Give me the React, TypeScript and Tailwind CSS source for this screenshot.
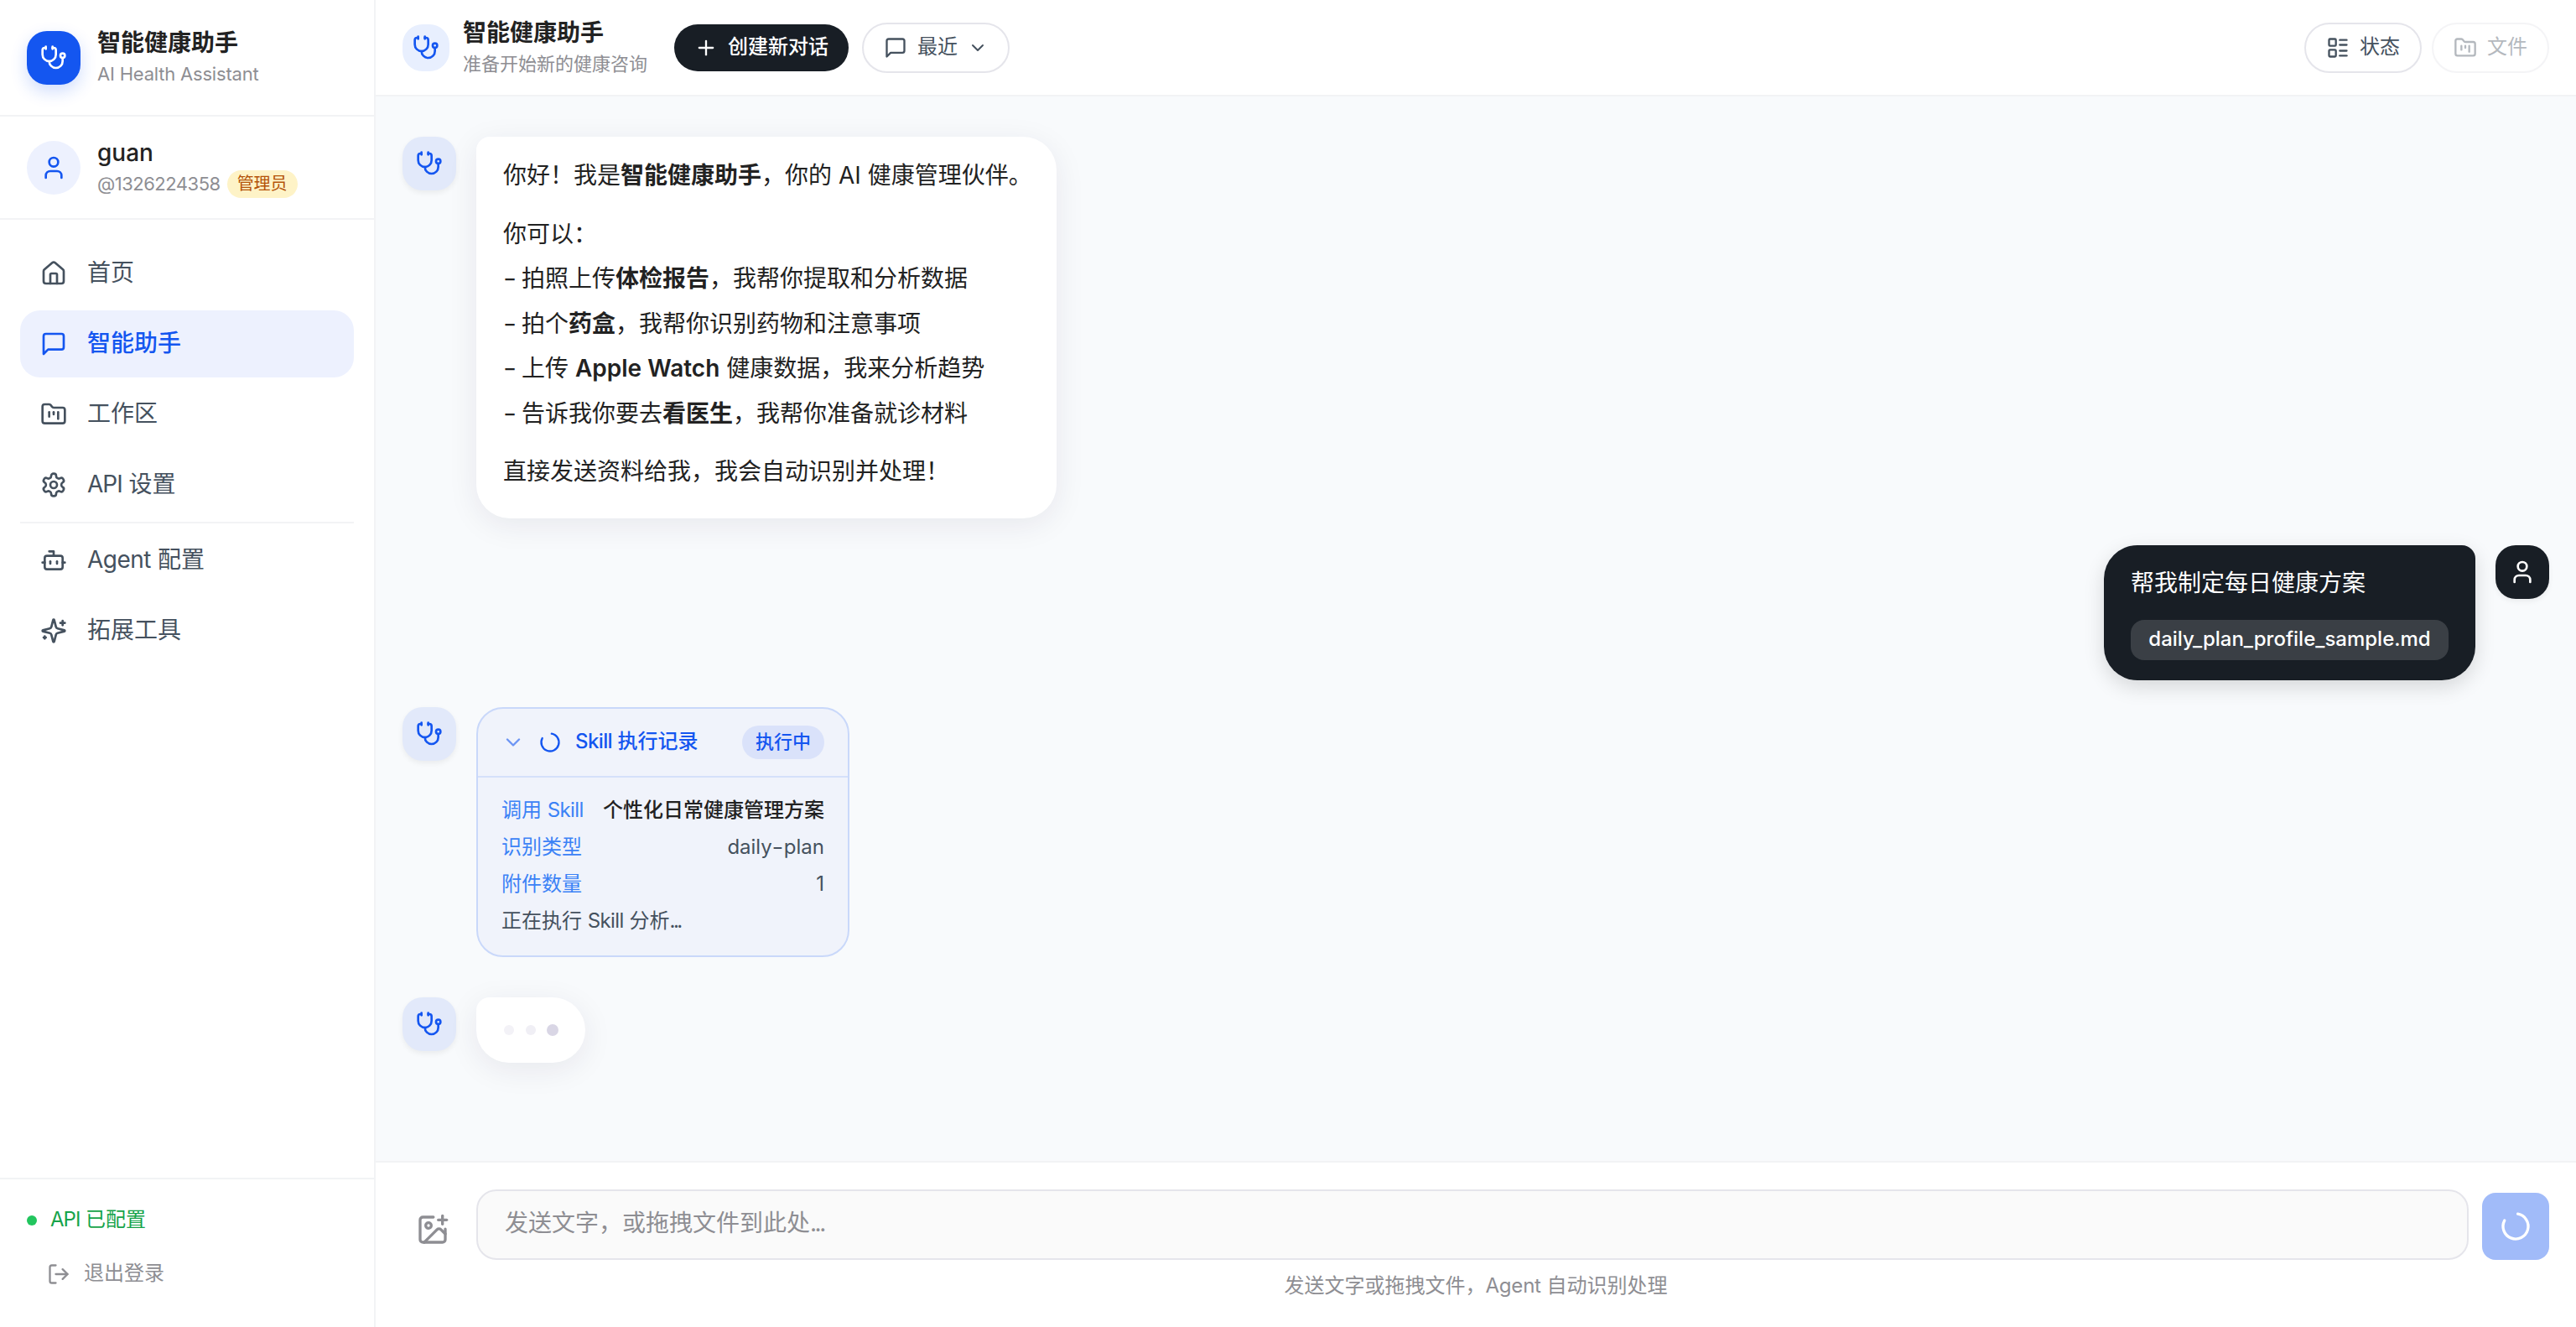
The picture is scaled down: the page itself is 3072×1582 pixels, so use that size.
import type { ReactNode } from "react";

type IconProps = { className?: string; children?: ReactNode };

function Icon({ className = "", children }: IconProps) {
  return (
    <svg
      viewBox="0 0 24 24"
      fill="none"
      stroke="currentColor"
      strokeWidth={2}
      strokeLinecap="round"
      strokeLinejoin="round"
      className={`shrink-0 ${className}`}
    >
      {children}
    </svg>
  );
}

const Stethoscope = ({ className }: IconProps) => (
  <Icon className={className}>
    <path d="M11 2v2" />
    <path d="M5 2v2" />
    <path d="M5 3H4a2 2 0 0 0-2 2v4a6 6 0 0 0 12 0V5a2 2 0 0 0-2-2h-1" />
    <path d="M8 15a6 6 0 0 0 12 0v-3" />
    <circle cx="20" cy="10" r="2" />
  </Icon>
);
const User = ({ className }: IconProps) => (
  <Icon className={className}>
    <path d="M19 21v-2a4 4 0 0 0-4-4H9a4 4 0 0 0-4 4v2" />
    <circle cx="12" cy="7" r="4" />
  </Icon>
);
const House = ({ className }: IconProps) => (
  <Icon className={className}>
    <path d="M15 21v-8a1 1 0 0 0-1-1h-4a1 1 0 0 0-1 1v8" />
    <path d="M3 10a2 2 0 0 1 .709-1.528l7-5.999a2 2 0 0 1 2.582 0l7 5.999A2 2 0 0 1 21 10v9a2 2 0 0 1-2 2H5a2 2 0 0 1-2-2z" />
  </Icon>
);
const Message = ({ className }: IconProps) => (
  <Icon className={className}>
    <path d="M21 15a2 2 0 0 1-2 2H7l-4 4V5a2 2 0 0 1 2-2h14a2 2 0 0 1 2 2z" />
  </Icon>
);
const FolderKanban = ({ className }: IconProps) => (
  <Icon className={className}>
    <path d="M4 20h16a2 2 0 0 0 2-2V8a2 2 0 0 0-2-2h-7.93a2 2 0 0 1-1.66-.9l-.82-1.2A2 2 0 0 0 7.93 3H4a2 2 0 0 0-2 2v13c0 1.1.9 2 2 2Z" />
    <path d="M8 10v4" />
    <path d="M12 10v2" />
    <path d="M16 10v6" />
  </Icon>
);
const Settings = ({ className }: IconProps) => (
  <Icon className={className}>
    <path d="M12.22 2h-.44a2 2 0 0 0-2 2v.18a2 2 0 0 1-1 1.73l-.43.25a2 2 0 0 1-2 0l-.15-.08a2 2 0 0 0-2.73.73l-.22.38a2 2 0 0 0 .73 2.73l.15.1a2 2 0 0 1 1 1.72v.51a2 2 0 0 1-1 1.74l-.15.09a2 2 0 0 0-.73 2.73l.22.38a2 2 0 0 0 2.73.73l.15-.08a2 2 0 0 1 2 0l.43.25a2 2 0 0 1 1 1.73V20a2 2 0 0 0 2 2h.44a2 2 0 0 0 2-2v-.18a2 2 0 0 1 1-1.73l.43-.25a2 2 0 0 1 2 0l.15.08a2 2 0 0 0 2.73-.73l.22-.39a2 2 0 0 0-.73-2.73l-.15-.08a2 2 0 0 1-1-1.74v-.5a2 2 0 0 1 1-1.74l.15-.09a2 2 0 0 0 .73-2.73l-.22-.38a2 2 0 0 0-2.73-.73l-.15.08a2 2 0 0 1-2 0l-.43-.25a2 2 0 0 1-1-1.73V4a2 2 0 0 0-2-2z" />
    <circle cx="12" cy="12" r="3" />
  </Icon>
);
const Bot = ({ className }: IconProps) => (
  <Icon className={className}>
    <path d="M12 8V4H8" />
    <rect width="16" height="12" x="4" y="8" rx="2" />
    <path d="M2 14h2" />
    <path d="M20 14h2" />
    <path d="M15 13v2" />
    <path d="M9 13v2" />
  </Icon>
);
const Sparkles = ({ className }: IconProps) => (
  <Icon className={className}>
    <path d="M9.937 15.5A2 2 0 0 0 8.5 14.063l-6.135-1.582a.5.5 0 0 1 0-.962L8.5 9.936A2 2 0 0 0 9.937 8.5l1.582-6.135a.5.5 0 0 1 .963 0L14.063 8.5A2 2 0 0 0 15.5 9.937l6.135 1.581a.5.5 0 0 1 0 .964L15.5 14.063a2 2 0 0 0-1.437 1.437l-1.582 6.135a.5.5 0 0 1-.963 0z" />
    <path d="M20 3v4" />
    <path d="M22 5h-4" />
    <path d="M4 17v2" />
    <path d="M5 18H3" />
  </Icon>
);
const LogOut = ({ className }: IconProps) => (
  <Icon className={className}>
    <path d="m16 17 5-5-5-5" />
    <path d="M21 12H9" />
    <path d="M9 21H5a2 2 0 0 1-2-2V5a2 2 0 0 1 2-2h4" />
  </Icon>
);
const Plus = ({ className }: IconProps) => (
  <Icon className={className}>
    <path d="M5 12h14" />
    <path d="M12 5v14" />
  </Icon>
);
const ChevronDown = ({ className }: IconProps) => (
  <Icon className={className}>
    <path d="m6 9 6 6 6-6" />
  </Icon>
);
const LayoutList = ({ className }: IconProps) => (
  <Icon className={className}>
    <rect width="7" height="7" x="3" y="3" rx="1" />
    <rect width="7" height="7" x="3" y="14" rx="1" />
    <path d="M14 4h7" />
    <path d="M14 9h7" />
    <path d="M14 15h7" />
    <path d="M14 20h7" />
  </Icon>
);
const Loader = ({ className = "" }: IconProps) => (
  <Icon className={`-rotate-[80deg] ${className}`}>
    <path d="M21 12a9 9 0 1 1-6.219-8.56" />
  </Icon>
);
const ImagePlus = ({ className }: IconProps) => (
  <Icon className={className}>
    <path d="M16 5h6" />
    <path d="M19 2v6" />
    <path d="M21 11.5V19a2 2 0 0 1-2 2H5a2 2 0 0 1-2-2V5a2 2 0 0 1 2-2h7.5" />
    <path d="m21 15-3.086-3.086a2 2 0 0 0-2.828 0L6 21" />
    <circle cx="9" cy="9" r="2" />
  </Icon>
);

type NavItemProps = {
  icon: (p: IconProps) => ReactNode;
  children: ReactNode;
  active?: boolean;
};

function NavItem({ icon: Glyph, children, active }: NavItemProps) {
  return (
    <div
      className={`flex h-20 items-center gap-6 rounded-3xl px-6 text-[28px] leading-[42px] ${
        active ? "bg-[#edf1fe] font-medium text-[#1456f0]" : "text-[#45515e]"
      }`}
    >
      <Glyph className="size-8" />
      <span className="pb-[3px]">{children}</span>
    </div>
  );
}

function Sidebar() {
  return (
    <aside className="flex w-[448px] shrink-0 flex-col border-r-2 border-[#f2f3f5] bg-white">
      <div className="flex h-[139px] items-center gap-5 border-b-2 border-[#f2f3f5] px-8">
        <div className="flex size-16 items-center justify-center rounded-[24px] bg-[#1456f0] text-white shadow-[0_8px_20px_rgba(20,86,240,0.2)]">
          <Stethoscope className="size-8" />
        </div>
        <div className="pb-0.5">
          <div className="text-[28px] leading-[42px] font-semibold text-[#222222]">智能健康助手</div>
          <div className="text-[22px] leading-[33px] text-[#8e8e93]">
            <span className="tracking-[-0.2px]">AI Health Assistant</span>
          </div>
        </div>
      </div>

      <div className="flex h-[123px] items-center gap-5 border-b-2 border-[#f2f3f5] px-8">
        <div className="flex size-16 items-center justify-center rounded-full bg-[#edf1fe] text-[#1456f0]">
          <User className="size-8" />
        </div>
        <div className="pb-0.5">
          <div className="text-[28px] leading-[42px] font-medium text-[#222222]">guan</div>
          <div className="flex items-center gap-2 text-[22px] leading-[33px] text-[#8e8e93]">
            <span className="tracking-[-0.5px]">@1326224358</span>
            <span className="rounded-full bg-[#fef3c7] px-3 text-[20px] leading-[33px] text-[#b45309]">管理员</span>
          </div>
        </div>
      </div>

      <nav className="flex flex-1 flex-col gap-1 px-6 pt-6">
        <NavItem icon={House}>首页</NavItem>
        <NavItem icon={Message} active>
          智能助手
        </NavItem>
        <NavItem icon={FolderKanban}>工作区</NavItem>
        <NavItem icon={Settings}>
          <span className="tracking-[-1px]">API</span> 设置
        </NavItem>
        <div className="h-0.5 bg-[#f2f3f5]" />
        <NavItem icon={Bot}>
          <span className="tracking-[-0.5px]">Agent</span> 配置
        </NavItem>
        <NavItem icon={Sparkles}>拓展工具</NavItem>
      </nav>

      <div className="h-[178px] border-t-2 border-[#f2f3f5] px-8 pt-[30px] text-[24px] leading-9">
        <div className="flex items-center gap-4 text-[#16a34a]">
          <span className="size-3 rounded-full bg-[#22c55e]" />
          <span className="pb-0.5">
            <span className="tracking-[-1px]">API</span> 已配置
          </span>
        </div>
        <div className="mt-[26px] flex items-center gap-4 px-6 text-[#8e8e93]">
          <LogOut className="size-7" />
          <span className="pb-0.5">退出登录</span>
        </div>
      </div>
    </aside>
  );
}

function Header() {
  return (
    <header className="flex h-[115px] shrink-0 items-center border-b-2 border-[#f2f3f5] bg-white px-8 text-[24px] leading-9">
      <div className="flex size-14 items-center justify-center rounded-[24px] bg-[#e8effe] text-[#1456f0]">
        <Stethoscope className="size-8" />
      </div>
      <div className="ml-4 pb-0.5">
        <div className="text-[28px] leading-[42px] font-semibold text-[#222222]">智能健康助手</div>
        <div className="text-[22px] leading-[33px] text-[#8e8e93]">准备开始新的健康咨询</div>
      </div>
      <button className="ml-8 flex h-14 items-center gap-3 rounded-full bg-[#181e25] px-6 font-medium text-white">
        <Plus className="size-7" />
        <span className="pb-0.5">创建新对话</span>
      </button>
      <button className="ml-4 flex h-15 items-center gap-3 rounded-full border-2 border-[#e5e5eb] px-6 text-[#45515e]">
        <Message className="size-7" />
        <span className="pb-0.5">最近</span>
        <ChevronDown className="size-6" />
      </button>
      <div className="ml-auto flex gap-3">
        <button className="flex h-15 items-center gap-3 rounded-full border-2 border-[#e5e5eb] px-6 text-[#45515e]">
          <LayoutList className="size-7" />
          <span className="pb-0.5">状态</span>
        </button>
        <button className="flex h-15 items-center gap-3 rounded-full border-2 border-[#e5e5eb] px-6 text-[#45515e] opacity-40">
          <FolderKanban className="size-7" />
          <span className="pb-0.5">文件</span>
        </button>
      </div>
    </header>
  );
}

function BotAvatar() {
  return (
    <div className="flex size-16 shrink-0 items-center justify-center rounded-[24px] bg-[#e2e9fa] text-[#1456f0] shadow-[0_3px_6px_rgba(0,0,0,0.06)]">
      <Stethoscope className="size-8" />
    </div>
  );
}

function Dash() {
  return <span className="mr-[6px] inline-block w-4 origin-left scale-x-125">-</span>;
}

function WelcomeMessage() {
  return (
    <div className="flex items-start gap-6">
      <BotAvatar />
      <div className="h-[455px] w-[692px] rounded-[40px] rounded-tl-[16px] bg-white px-8 pt-5 text-[28px] leading-[53.5px] whitespace-nowrap text-[#222222] shadow-[0_8px_36px_rgba(44,20,70,0.08)]">
        <p>
          你好！我是<b className="font-bold">智能健康助手</b>，你的 <span>AI</span> 健康管理伙伴。
        </p>
        <div className="my-4">
          <p>你可以：</p>
          <p>
            <Dash />
            拍照上传<b>体检报告</b>，我帮你提取和分析数据
          </p>
          <p>
            <Dash />
            拍个<b>药盒</b>，我帮你识别药物和注意事项
          </p>
          <p>
            <Dash />
            上传 <b className="font-semibold">Apple Watch</b> 健康数据，我来分析趋势
          </p>
          <p>
            <Dash />
            告诉我你要去<b>看医生</b>，我帮你准备就诊材料
          </p>
        </div>
        <p>直接发送资料给我，我会自动识别并处理！</p>
      </div>
    </div>
  );
}

function UserMessage() {
  return (
    <div className="mt-8 flex items-start justify-end gap-6">
      <div className="h-[161px] w-[443px] rounded-[40px] rounded-tr-[16px] bg-[#181e25] px-8 pt-[19px] text-white shadow-[0_8px_24px_rgba(0,0,0,0.14)]">
        <p className="text-[28px] leading-[53px]">帮我制定每日健康方案</p>
        <div className="mt-[17px] flex h-12 items-center justify-center rounded-[16px] bg-white/15 pb-[3px] text-[24px] leading-9 font-medium whitespace-nowrap">
          <span>daily_plan_profile_sample.md</span>
        </div>
      </div>
      <div className="flex size-16 shrink-0 items-center justify-center rounded-[24px] bg-[#181e25] text-white shadow-[0_3px_6px_rgba(0,0,0,0.06)]">
        <User className="size-8" />
      </div>
    </div>
  );
}

function SkillCard() {
  return (
    <div className="mt-8 flex items-start gap-6">
      <BotAvatar />
      <div className="h-[298px] w-[445px] rounded-[32px] border-2 border-[#c9d8fa] bg-[#f0f3fb] text-[24px] leading-9 whitespace-nowrap">
        <div className="flex h-[82px] items-center border-b-2 border-[#d5e0fa] px-7 font-medium text-[#1456f0]">
          <ChevronDown className="size-7 opacity-60" />
          <Loader className="ml-4 size-7" />
          <span className="ml-4 pb-0.5">
            <span className="tracking-[-0.6px]">Skill</span> 执行记录
          </span>
          <span className="ml-auto h-10 rounded-full bg-[#dae2fa] px-4 text-[22px] leading-[38px]">执行中</span>
        </div>
        <div className="flex flex-col gap-2 px-7 pt-[21px] text-[#45515e]">
          <div className="flex justify-between">
            <span className="text-[#3b82f6]">
              调用 <span className="tracking-[-0.6px]">Skill</span>
            </span>
            <span className="font-medium text-[#222222]">个性化日常健康管理方案</span>
          </div>
          <div className="flex justify-between">
            <span className="text-[#3b82f6]">识别类型</span>
            <span>
              daily<span className="mx-[1.5px] inline-block scale-x-125">-</span>plan
            </span>
          </div>
          <div className="flex justify-between">
            <span className="text-[#3b82f6]">附件数量</span>
            <span>1</span>
          </div>
          <div>
            正在执行 <span className="tracking-[-0.6px]">Skill</span> 分析<span className="tracking-[-2.5px]">...</span>
          </div>
        </div>
      </div>
    </div>
  );
}

function TypingMessage() {
  return (
    <div className="mt-12 flex items-start gap-6">
      <BotAvatar />
      <div className="flex h-[78px] w-[130px] items-center justify-center gap-3.5 rounded-[40px] rounded-tl-[16px] bg-white shadow-[0_8px_36px_rgba(44,20,70,0.08)]">
        <span className="size-3 rounded-full bg-[#f3f2f7]" />
        <span className="size-3 rounded-full bg-[#f0eff5]" />
        <span className="-ml-px size-3.5 rounded-full bg-[#d9d6e5]" />
      </div>
    </div>
  );
}

function Composer() {
  return (
    <footer className="h-[198px] shrink-0 border-t-2 border-[#f2f3f5] bg-white px-8 pt-8">
      <div className="flex items-end gap-4">
        <button className="flex size-18 items-center justify-center text-[#8e8e93]">
          <ImagePlus className="size-10" />
        </button>
        <div className="flex h-[84px] flex-1 items-center rounded-[24px] border-2 border-[#e5e5eb] bg-[#fafafa] px-8 pb-1 text-[28px] leading-[42px] text-[#8e8e93]">
          发送文字，或拖拽文件到此处<span className="tracking-[-2.5px]">...</span>
        </div>
        <button className="flex size-20 items-center justify-center rounded-[16px] bg-[#a1bbf9] text-white">
          <Loader className="size-10" />
        </button>
      </div>
      <p className="mt-[13px] text-center text-[24px] leading-9 text-[#8e8e93]">
        发送文字或拖拽文件，<span className="tracking-[-0.2px]">Agent</span> 自动识别处理
      </p>
    </footer>
  );
}

export default function App() {
  return (
    <div className="flex h-[1582px] w-[3072px] overflow-hidden bg-white font-['Inter','Noto_Sans_CJK_SC',sans-serif]">
      <Sidebar />
      <div className="flex min-w-0 flex-1 flex-col">
        <Header />
        <main className="flex-1 overflow-hidden bg-[#f8fafc] px-8 pt-12">
          <WelcomeMessage />
          <UserMessage />
          <SkillCard />
          <TypingMessage />
        </main>
        <Composer />
      </div>
    </div>
  );
}
